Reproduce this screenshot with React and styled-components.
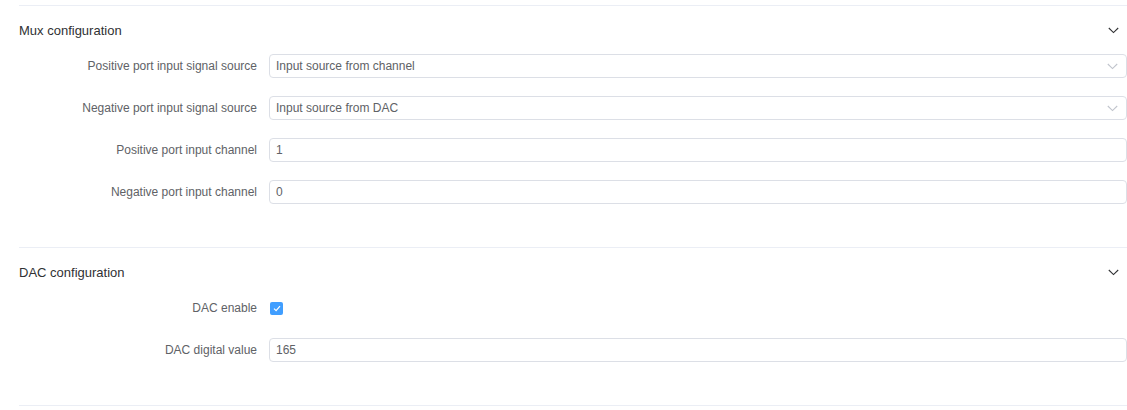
import React from "react";
import styled, { createGlobalStyle } from "styled-components";

const Global = createGlobalStyle`
  html, body { margin: 0; padding: 0; background: #fff; }
  body { font-family: "Liberation Sans", Arial, sans-serif; }
  * { box-sizing: border-box; }
`;

const Page = styled.div`
  width: 1127px;
  padding: 5px 0 0 19px;
`;

const Collapse = styled.div`
  border-top: 1px solid #ebeef5;
`;

const Item = styled.div`
  border-bottom: 1px solid #ebeef5;
`;

const Header = styled.div`
  height: 48px;
  display: flex;
  align-items: center;
  justify-content: space-between;
  padding-right: 8px;
  font-size: 13px;
  color: #303133;
`;

const Content = styled.div`
  padding-bottom: 25px;
`;

const Row = styled.div`
  display: flex;
  align-items: center;
  height: 24px;
  margin-bottom: 18px;
`;

const Label = styled.label`
  width: 250px;
  padding-right: 12px;
  text-align: right;
  font-size: 12px;
  color: #606266;
  white-space: nowrap;
`;

const Field = styled.div`
  flex: 1;
  height: 24px;
  border: 1px solid #dcdfe6;
  border-radius: 4px;
  display: flex;
  align-items: center;
  justify-content: space-between;
  padding: 0 8px 0 6px;
  font-size: 12px;
  color: #606266;
`;

const Check = styled.span`
  width: 13px;
  height: 13px;
  margin-left: 1px;
  border-radius: 2px;
  background: #409eff;
  display: inline-flex;
  align-items: center;
  justify-content: center;
`;

const Chevron = ({ color = "#303133" }) => (
  <svg width="11" height="7" viewBox="0 0 11 7" fill="none">
    <path d="M0.8 1 L5.5 5.6 L10.2 1" stroke={color} strokeWidth="1.1" />
  </svg>
);

const Section = ({ title, children }) => (
  <Item>
    <Header>
      <span>{title}</span>
      <Chevron />
    </Header>
    <Content>{children}</Content>
  </Item>
);

const SelectField = ({ value }) => (
  <Field>
    <span>{value}</span>
    <Chevron color="#c0c4cc" />
  </Field>
);

export default function App() {
  return (
    <Page>
      <Global />
      <Collapse>
        <Section title="Mux configuration">
          <Row>
            <Label>Positive port input signal source</Label>
            <SelectField value="Input source from channel" />
          </Row>
          <Row>
            <Label>Negative port input signal source</Label>
            <SelectField value="Input source from DAC" />
          </Row>
          <Row>
            <Label>Positive port input channel</Label>
            <Field>1</Field>
          </Row>
          <Row>
            <Label>Negative port input channel</Label>
            <Field>0</Field>
          </Row>
        </Section>
        <Section title="DAC configuration">
          <Row>
            <Label>DAC enable</Label>
            <Check>
              <svg width="8" height="7" viewBox="0 0 8 7" fill="none">
                <path d="M1 3.6 L3.1 5.6 L7 1.2" stroke="#fff" strokeWidth="1.2" />
              </svg>
            </Check>
          </Row>
          <Row>
            <Label>DAC digital value</Label>
            <Field>165</Field>
          </Row>
        </Section>
      </Collapse>
    </Page>
  );
}
